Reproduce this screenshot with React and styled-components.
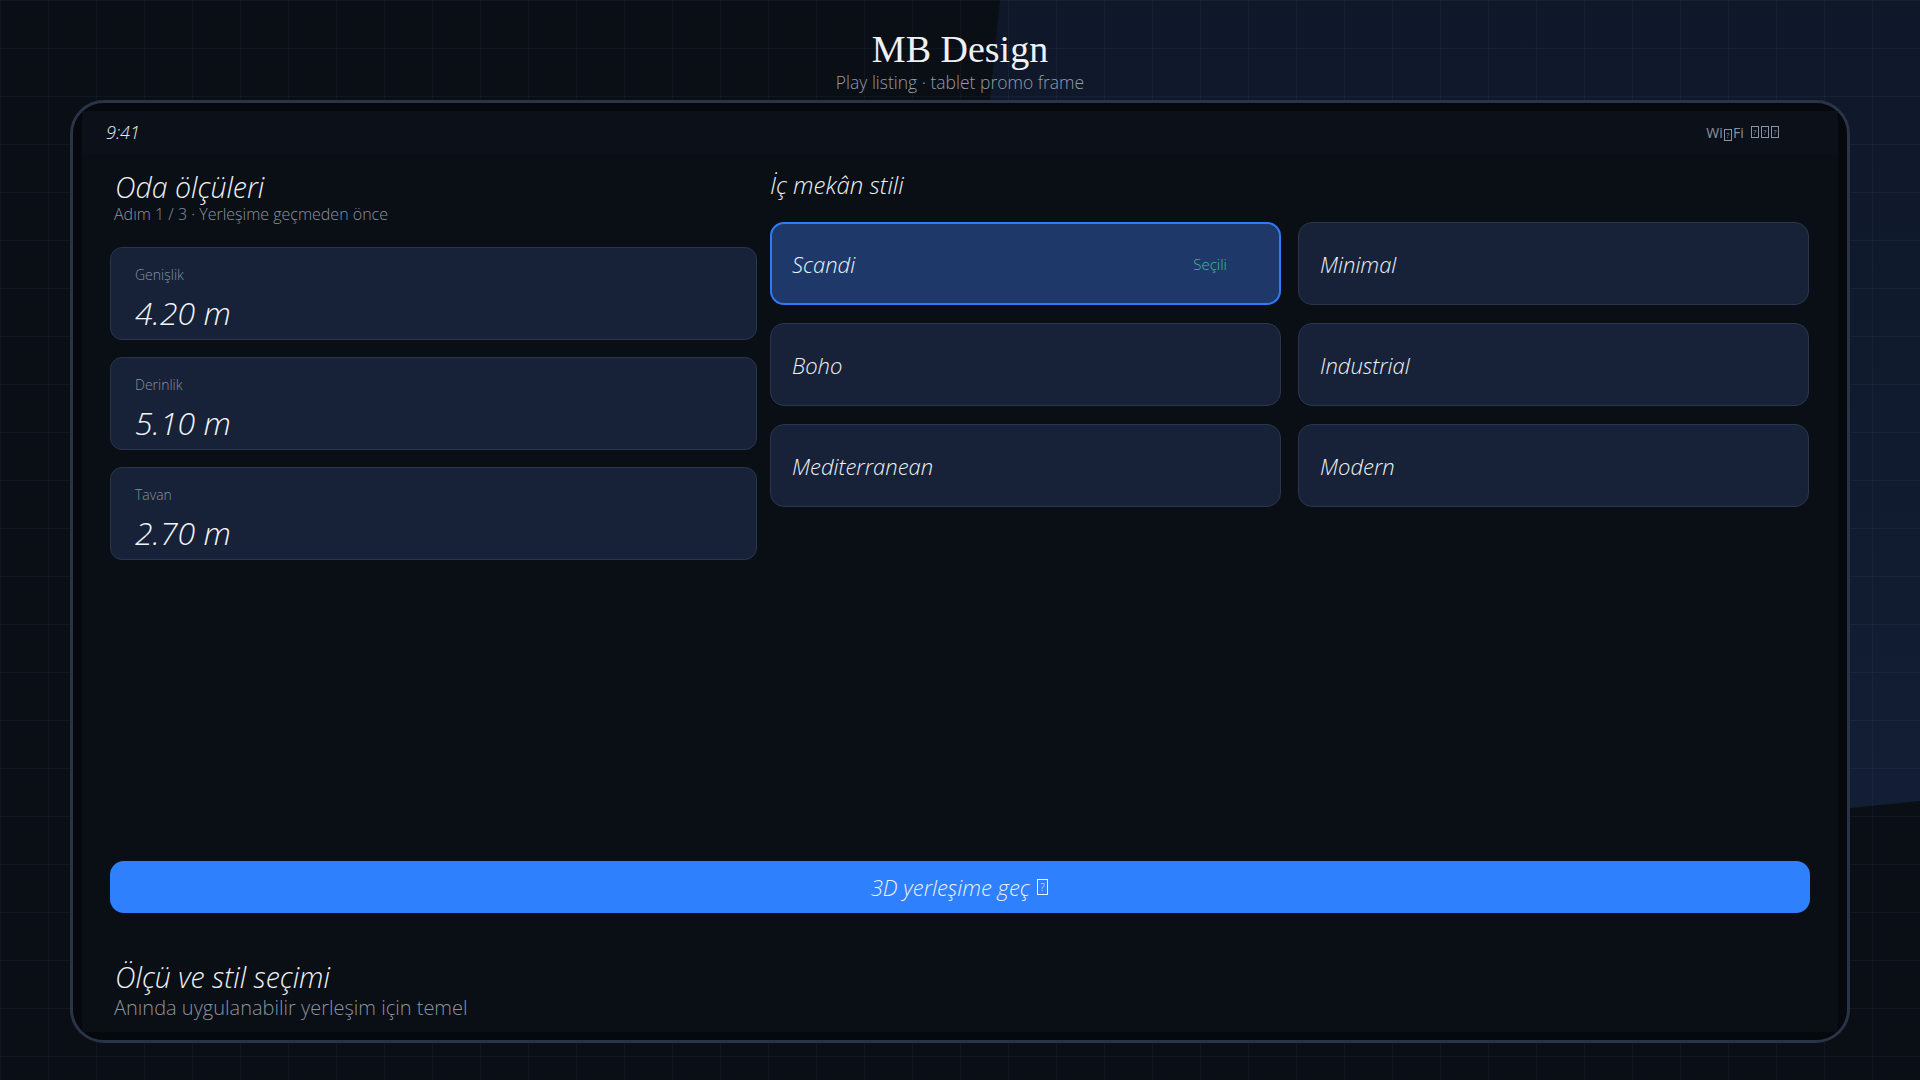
import React from 'react';
import styled, { createGlobalStyle } from 'styled-components';

const GlobalStyle = createGlobalStyle`
  html, body {
    margin: 0;
    padding: 0;
    background: #0a0e15;
  }
  * { box-sizing: border-box; }
`;

const UI = `'Open Sans', 'Noto Sans', 'DejaVu Sans', sans-serif`;

const StyledPage = styled.div`
  position: relative;
  width: 1920px;
  height: 1080px;
  overflow: hidden;
  background: #0a0e15;
  display: flex;
  flex-direction: column;
  align-items: center;
  font-family: ${UI};

  /* big soft panel behind the tablet, top right */
  &::before {
    content: '';
    position: absolute;
    inset: 0;
    background: linear-gradient(180deg, #0f1829 0%, #111c31 55%, #14213a 100%);
    clip-path: polygon(1000px 0, 100% 0, 100% 801px, 910px 902px);
  }
  &::after {
    content: '';
    position: absolute;
    inset: 0;
    background-image:
      linear-gradient(to right, rgba(148, 163, 184, 0.06) 1px, transparent 1px),
      linear-gradient(to bottom, rgba(148, 163, 184, 0.06) 1px, transparent 1px);
    background-size: 48px 48px;
    pointer-events: none;
  }
`;
const StyledHeader = styled.header`
  position: relative;
  z-index: 1;
  margin-top: 27px;
  text-align: center;
`;
const StyledBrand = styled.h1`
  margin: 0;
  font-family: 'Liberation Serif', 'DejaVu Serif', serif;
  font-weight: 400;
  font-size: 38px;
  line-height: 44px;
  color: #eef1f7;
`;
const StyledTagline = styled.div`
  font-size: 17.5px;
  font-weight: 350;
  line-height: 22px;
  color: #949cab;
`;
const StyledTablet = styled.div`
  position: relative;
  z-index: 1;
  margin-top: 7px;
  width: 1780px;
  height: 943px;
  border: 3px solid #2a3446;
  border-radius: 34px;
  background: #05080c;
  padding: 8px 9px;
  display: flex;
`;
const StyledScreen = styled.div`
  flex: 1;
  display: flex;
  flex-direction: column;
  background: #0a0e15;
  border-radius: 2px;
  overflow: hidden;
`;
const StyledStatusBar = styled.div`
  height: 42px;
  flex-shrink: 0;
  display: flex;
  align-items: center;
  justify-content: space-between;
  padding: 0 58px 0 24px;
  background: #0c1119;
`;
const StyledTime = styled.span`
  font-style: italic;
  font-weight: 350;
  font-size: 18px;
  color: #e6eaf1;
`;
const StyledSignal = styled.span`
  display: flex;
  align-items: center;
  gap: 6px;
  font-size: 14px;
  color: #8a93a3;
`;
const StyledTofuRow = styled.span`
  display: inline-flex;
  align-items: center;
`;
const StyledTofu = styled.span`
  display: inline-flex;
  align-items: center;
  justify-content: center;
  width: ${p => p.$size * 0.58}px;
  height: ${p => p.$size * 0.82}px;
  border: 1px solid currentColor;
  font-size: ${p => p.$size * 0.5}px;
  font-style: normal;
  line-height: 1;
  margin: 0 1px;
  vertical-align: middle;
`;
const StyledMain = styled.div`
  flex: 1;
  display: grid;
  grid-template-columns: 647px 1fr;
  column-gap: 13px;
  padding: 17px 29px 0 28px;
  align-items: start;
`;
const StyledColumn = styled.section`
  display: flex;
  flex-direction: column;
`;
const StyledTitle = styled.h2`
  margin: 0;
  padding-left: ${p => p.$indent ?? 5}px;
  font-style: italic;
  font-weight: 350;
  font-size: ${p => p.$size || 28.5}px;
  line-height: ${p => p.$line || Math.round(p.$size || 28) + 6}px;
  color: #eef1f6;
`;
const StyledSub = styled.div`
  padding-left: 4px;
  font-weight: 350;
  font-size: ${p => p.$size || 16}px;
  line-height: ${p => p.$line || 20}px;
  color: #8a93a2;
`;
const StyledFieldList = styled.div`
  margin-top: 23px;
  display: flex;
  flex-direction: column;
  gap: 17px;
`;
const StyledField = styled.div`
  height: 93px;
  border-radius: 12px;
  background: #172238;
  border: 1px solid #2a3650;
  padding: 17px 24px 0;
`;
const StyledFieldLabel = styled.div`
  font-size: 14px;
  font-weight: 350;
  line-height: 20px;
  color: #858fa0;
`;
const StyledFieldValue = styled.div`
  margin-top: 9px;
  font-style: italic;
  font-weight: 300;
  font-size: 32px;
  line-height: 38px;
  color: #f1f4f9;
`;
const StyledStyleGrid = styled.div`
  margin-top: 22px;
  display: grid;
  grid-template-columns: 1fr 1fr;
  column-gap: 17px;
  row-gap: 18px;
`;
const StyledStyleCard = styled.div`
  height: 83px;
  border-radius: 14px;
  display: flex;
  align-items: center;
  justify-content: space-between;
  padding: 0 52px 0 ${p => (p.$active ? 20 : 21)}px;
  background: ${p => (p.$active ? '#1e3969' : '#172238')};
  border: ${p => (p.$active ? '2px solid #2f7cf2' : '1px solid #2a3650')};
  font-style: italic;
  font-weight: 300;
  font-size: 22px;
  color: #eef2f8;
`;
const StyledBadge = styled.span`
  font-style: normal;
  font-size: 15px;
  color: #3cbf8c;
`;
const StyledButton = styled.button`
  flex-shrink: 0;
  margin: 0 28px;
  height: 52px;
  border: none;
  border-radius: 14px;
  background: #2f80fc;
  font-family: ${UI};
  font-style: italic;
  font-weight: 300;
  font-size: 22px;
  color: #e9f1ff;
  display: flex;
  align-items: center;
  justify-content: center;
  gap: 6px;
`;
const StyledFooter = styled.footer`
  flex-shrink: 0;
  padding: 46px 28px 11px 28px;
`;

const fields = [
  { label: 'Genişlik', value: '4.20 m' },
  { label: 'Derinlik', value: '5.10 m' },
  { label: 'Tavan', value: '2.70 m' },
];

const styles = ['Scandi', 'Minimal', 'Boho', 'Industrial', 'Mediterranean', 'Modern'];

function Tofu({ size, count = 1 }) {
  return (
    <StyledTofuRow>
      {Array.from({ length: count }).map((_, i) => (
        <StyledTofu key={i} $size={size}>?</StyledTofu>
      ))}
    </StyledTofuRow>
  );
}

export default function App() {
  const [selected] = React.useState('Scandi');

  return (
    <StyledPage>
      <GlobalStyle />
      <StyledHeader>
        <StyledBrand>MB Design</StyledBrand>
        <StyledTagline>Play listing · tablet promo frame</StyledTagline>
      </StyledHeader>

      <StyledTablet>
        <StyledScreen>
          <StyledStatusBar>
            <StyledTime>9:41</StyledTime>
            <StyledSignal>
              <span>Wi<Tofu size={14} />Fi</span>
              <Tofu size={14} count={3} />
            </StyledSignal>
          </StyledStatusBar>

          <StyledMain>
            <StyledColumn>
              <StyledTitle>Oda ölçüleri</StyledTitle>
              <StyledSub>Adım 1 / 3 · Yerleşime geçmeden önce</StyledSub>
              <StyledFieldList>
                {fields.map(f => (
                  <StyledField key={f.label}>
                    <StyledFieldLabel>{f.label}</StyledFieldLabel>
                    <StyledFieldValue>{f.value}</StyledFieldValue>
                  </StyledField>
                ))}
              </StyledFieldList>
            </StyledColumn>

            <StyledColumn>
              <StyledTitle $size={24} $indent={0}>İç mekân stili</StyledTitle>
              <StyledStyleGrid>
                {styles.map(s => (
                  <StyledStyleCard key={s} $active={s === selected}>
                    {s}
                    {s === selected && <StyledBadge>Seçili</StyledBadge>}
                  </StyledStyleCard>
                ))}
              </StyledStyleGrid>
            </StyledColumn>
          </StyledMain>

          <StyledButton>
            3D yerleşime geç <Tofu size={20} />
          </StyledButton>

          <StyledFooter>
            <StyledTitle $line={36}>Ölçü ve stil seçimi</StyledTitle>
            <StyledSub $size={20} $line={26}>Anında uygulanabilir yerleşim için temel</StyledSub>
          </StyledFooter>
        </StyledScreen>
      </StyledTablet>
    </StyledPage>
  );
}
